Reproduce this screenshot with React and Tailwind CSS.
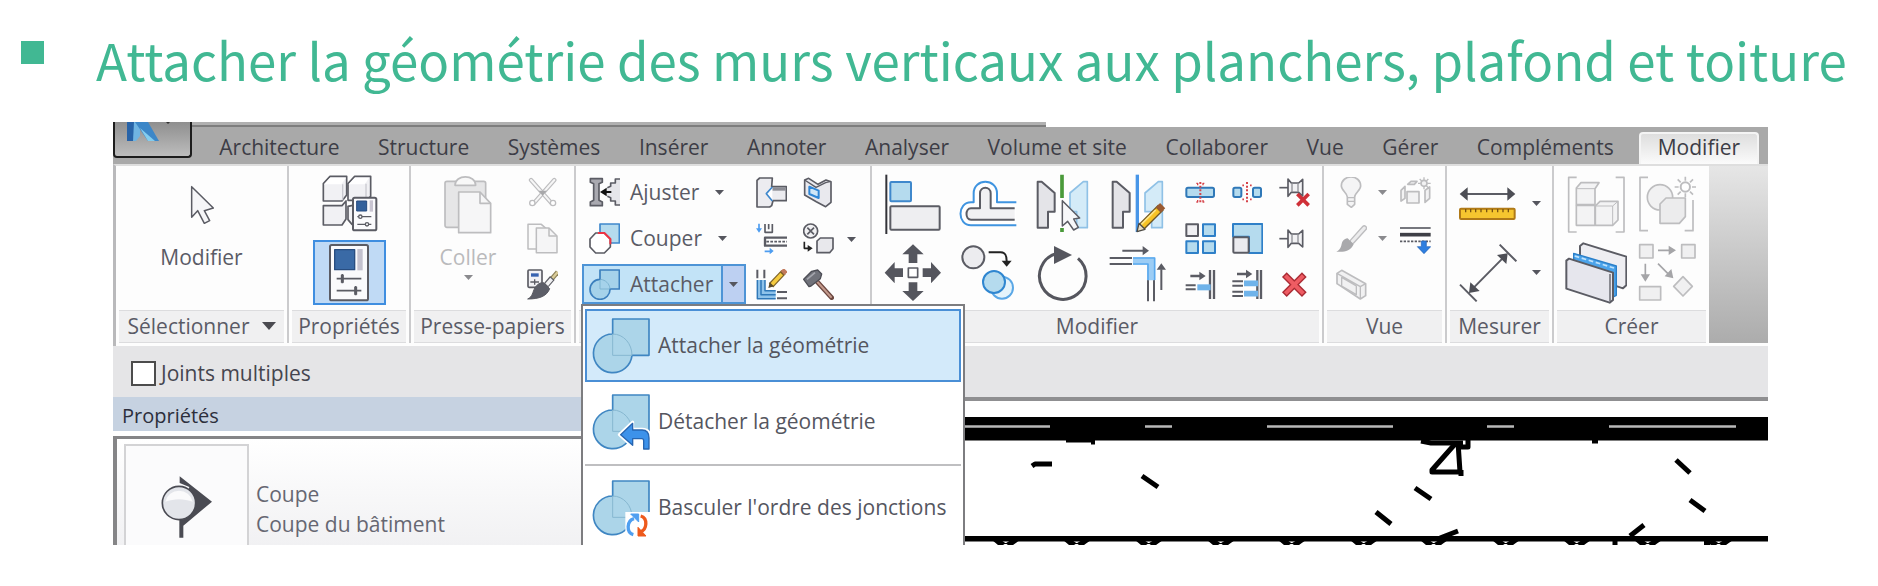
const INK = '#5b5c64';
const BLUE = '#3f88cc';
const SKY = '#b5dbee';
const MUTE = '#bdbdbf';

function Icon({ w, h, box, children }) {
  return (
    <svg width={w} height={h} viewBox={box} fill="none" strokeLinejoin="round" className="shrink-0" aria-hidden="true">
      {children}
    </svg>
  );
}

function Caret({ muted }) {
  return (
    <svg width="9" height="5" viewBox="0 0 9 5" className="shrink-0" aria-hidden="true">
      <path d="M0 0h9L4.500 5z" fill={muted ? '#8a8a8e' : '#55565e'} />
    </svg>
  );
}

/* ---------- Sélectionner / Propriétés ---------- */
const CursorIcon = () => (
  <Icon w={24} h={40} box="267 225 72 120">
    <path d="M272 230v92l18-20 20 38 16-8-16-30 27-8z" fill="#f6f6f8" stroke={INK} strokeWidth="4.5" />
  </Icon>
);

const TypeIcon = () => (
  <Icon w={57} h={57} box="661 196 171 171">
    <g fill="#f1f1f4" stroke={INK} strokeWidth="5">
      <path d="M742 222l20-22h48v60l-12 12h-56z" />
      <path d="M742 290v40l12 14h16v-60z" />
      <path d="M668 222l20-22h50v56l-14 18h-56z" />
      <path d="M668 288h56l12-14v54l-12 18h-56z" />
    </g>
    <path d="M670 224l18-20h48l-14 20zM744 224l18-20h44l-14 20z" fill="#fff" />
    <path d="M726 224v48M796 222v40" stroke="#c9c9d0" strokeWidth="4" />
    <rect x="757" y="264" width="70" height="98" rx="5" fill="#fbfbfd" stroke={INK} strokeWidth="6" />
    <rect x="768" y="274" width="30" height="30" fill="#33619c" stroke="#284d80" strokeWidth="3" />
    <path d="M812 272v34" stroke="#c9c5d2" strokeWidth="10" />
    <path d="M770 321h42M770 344h42" stroke={INK} strokeWidth="4" />
    <circle cx="779" cy="321" r="5" fill="#fff" stroke={INK} strokeWidth="4" />
    <circle cx="799" cy="344" r="5" fill="#fff" stroke={INK} strokeWidth="4" />
  </Icon>
);

const PropsIcon = () => (
  <Icon w={42} h={59} box="678 396 126 177">
    <rect x="684" y="402" width="114" height="166" rx="5" fill="#fafafc" stroke={INK} strokeWidth="6" />
    <rect x="698" y="416" width="60" height="60" fill="#3a6aa6" stroke="#284d80" strokeWidth="4" />
    <path d="M774 414v64" stroke="#c4c2cf" strokeWidth="16" />
    <path d="M704 503h74M704 539h74M721 489v28M761 525v28" stroke={INK} strokeWidth="5" />
    <path d="M721 491v24M761 527v24" stroke={INK} strokeWidth="9" />
  </Icon>
);

/* ---------- Presse-papiers ---------- */
const ClipboardIcon = () => (
  <Icon w={50} h={60} box="130 45 150 180">
    <rect x="136" y="64" width="122" height="138" rx="6" fill="#e6e6e7" stroke={MUTE} strokeWidth="5" />
    <path d="M166 76c0-34 62-34 62 0z" fill="#f8f8f8" stroke={MUTE} strokeWidth="5" />
    <path d="M177 96h64l32 34v88h-96z" fill="#f6f6f7" stroke={MUTE} strokeWidth="5" />
    <path d="M241 96v34h32" stroke={MUTE} strokeWidth="5" />
  </Icon>
);

const ScissorsIcon = () => (
  <Icon w={31} h={31} box="384 51 93 93">
    <path d="M396 60l60 68M466 60l-60 68" stroke={MUTE} strokeWidth="13" strokeLinecap="round" />
    <path d="M396 60l60 68M466 60l-60 68" stroke="#f6f6f6" strokeWidth="6" strokeLinecap="round" />
    <path d="M419 92h24l-12 16z" fill="#a8a8aa" />
    <circle cx="400" cy="129" r="8" fill="#fff" stroke={MUTE} strokeWidth="4" />
    <circle cx="462" cy="129" r="8" fill="#fff" stroke={MUTE} strokeWidth="4" />
  </Icon>
);

const CopyPagesIcon = () => (
  <Icon w={31} h={31} box="384 190 93 93">
    <path d="M387 194h40l18 16v58h-58z" fill="#fafafa" stroke={MUTE} strokeWidth="4.5" />
    <path d="M412 205h38l24 24v50h-62z" fill="#f5f5f6" stroke={MUTE} strokeWidth="4.5" />
    <path d="M450 205v24h24" stroke={MUTE} strokeWidth="4.5" />
  </Icon>
);

const MatchIcon = () => (
  <Icon w={31} h={31} box="384 327 93 93">
    <rect x="387" y="330" width="42" height="52" rx="3" fill="#f1f1f5" stroke={INK} strokeWidth="5" />
    <path d="M396 345h23" stroke="#3762b0" strokeWidth="10" />
    <path d="M394 366h26M407 358v16" stroke={INK} strokeWidth="4" />
    <path d="M476 336l-26 30" stroke="#8b8058" strokeWidth="14" />
    <path d="M476 336l-24 28" stroke="#d9cb98" strokeWidth="7" />
    <path d="M460 354l-18 21" stroke={INK} strokeWidth="18" />
    <path d="M458 357l-15 17" stroke="#f0f0f2" strokeWidth="11" />
    <path d="M434 368l18 18c-8 22-30 31-66 31 16-8 14-20 22-34 6-10 16-16 26-15z" fill="#5c5e68" stroke={INK} strokeWidth="3" />
  </Icon>
);

/* ---------- Géométrie ---------- */
const CopeIcon = () => (
  <Icon w={31} h={31} box="55 52 93 93">
    <path d="M59 57h36v11l-10 4v50l10 5v11H59v-11l10-5V72l-10-4z" fill="#a9a9b0" stroke={INK} strokeWidth="5" />
    <path d="M148 58h-14v12h-14v10l-12 3v26l12 4v10h14v12h14z" fill="#e6e6ea" />
    <path d="M148 58h-14v12h-14v10l-10 4M110 110l10 4v10h14v12h14" stroke={INK} strokeWidth="5" />
    <path d="M122 97H96" stroke="#111" strokeWidth="6" />
    <path d="M88 97l20-13v26z" fill="#111" />
  </Icon>
);

const CutIcon = () => (
  <Icon w={31} h={31} box="55 190 93 93">
    <rect x="88" y="193" width="58" height="57" fill={SKY} stroke={BLUE} strokeWidth="5" />
    <path d="M75 220h26l18 18v24l-18 18H75l-17-18v-24z" fill="#fff" stroke={INK} strokeWidth="5" />
    <path d="M82 220h19l18 18v16" stroke="#ee3344" strokeWidth="6" />
  </Icon>
);

const JoinIcon = () => (
  <Icon w={31} h={31} box="55 327 93 93">
    <path d="M88 330h58v57h-28a30 30 0 1 1-30-29z" fill="#a5d2ea" stroke="#3b7fbd" strokeWidth="5" />
    <path d="M88 360v27h28M90 358c14 2 26 12 28 28" stroke="#7fb5d2" strokeWidth="3" />
  </Icon>
);

const WallOpeningIcon = () => (
  <Icon w={31} h={31} box="557 54 93 93">
    <path d="M560 64l8-7h38l-2 26h44v42h-40l-4 15-6 4h-38z" fill="#ececf0" stroke={INK} strokeWidth="5" />
    <path d="M606 85h40v10h-40z" fill="#8c8d95" />
    <path d="M606 84l-18 20 18 22" stroke={BLUE} strokeWidth="5" fill="#fff" />
  </Icon>
);

const SplitFaceIcon = () => (
  <Icon w={31} h={31} box="702 53 93 93">
    <path d="M707 62l12-5 28 18 24-13 15 5v62l-16 13-28-15-35-20z" fill="#e9e9ee" stroke={INK} strokeWidth="5" />
    <path d="M707 62l34 22 29-14 15-4" stroke={INK} strokeWidth="4" />
    <path d="M721 82l28 12v22l-28-12z" fill="#cfe6f7" stroke="#2f86d6" strokeWidth="6" />
  </Icon>
);

const BeamIcon = () => (
  <Icon w={31} h={31} box="557 189 93 93">
    <path d="M566 191v20M583 274h22" stroke="#4e9df0" strokeWidth="5" />
    <path d="M557 205h18l-9 13zM598 263v20l12-10z" fill="#4e9df0" />
    <path d="M584 192v25h22v-25M595 192v16" stroke={INK} strokeWidth="5" />
    <path d="M650 233h-66v24h66" stroke={INK} strokeWidth="7" />
    <path d="M588 245h62" stroke={INK} strokeWidth="5" strokeDasharray="8 4" />
  </Icon>
);

const DemolishSwapIcon = () => (
  <Icon w={31} h={31} box="700 190 93 93">
    <circle cx="723" cy="214" r="21" fill="#f1f1f3" stroke={INK} strokeWidth="5" />
    <path d="M713 204l20 20M733 204l-20 20" stroke={INK} strokeWidth="5" />
    <path d="M704 246v20h12" stroke="#222" strokeWidth="5" />
    <path d="M714 256l15 10-15 10z" fill="#222" />
    <path d="M742 244l10-9h38v32l-10 12h-38z" fill="#e8e8ec" stroke={INK} strokeWidth="5" />
  </Icon>
);

const WallJoinIcon = () => (
  <Icon w={31} h={31} box="557 327 93 93">
    <path d="M561 329v26M582 329v26M620 396h30M620 415h30" stroke={INK} strokeWidth="6" />
    <path d="M560 360v57h56v-26h-32v-31z" fill="#8fc3ea" />
    <path d="M561 360v56h55M584 360v32h32M572 360v44h44" stroke="#2f78b8" strokeWidth="4.5" />
    <path d="M640 336l-38 40" stroke="#7c6128" strokeWidth="18" />
    <path d="M634 342l-30 32" stroke="#f5cb3f" strokeWidth="11" />
    <path d="M646 330l-9 9" stroke="#c27a5c" strokeWidth="16" />
    <path d="M594 384l4-17 13 12z" fill="#5a4b2a" />
  </Icon>
);

const HammerIcon = () => (
  <Icon w={31} h={31} box="700 327 93 93">
    <path d="M736 358l50 55" stroke="#6b4740" strokeWidth="14" strokeLinecap="round" />
    <path d="M738 360l46 51" stroke="#c49a8c" strokeWidth="6" strokeLinecap="round" />
    <path d="M702 358l24-24 18-4 12 12-4 14-28 22-6 2z" fill="#70727a" stroke="#4d4e56" strokeWidth="4" />
    <path d="M712 358l24-20" stroke="#a5a6ae" strokeWidth="5" />
  </Icon>
);

/* ---------- Modifier ---------- */
const AlignIcon = () => (
  <Icon w={58} h={60} box="42 40 174 180">
    <path d="M49 42v178" stroke="#333339" strokeWidth="6" />
    <rect x="61" y="64" width="62" height="58" rx="3" fill={SKY} stroke={BLUE} strokeWidth="6" />
    <rect x="61" y="137" width="148" height="70" rx="3" fill="#eeeef1" stroke={INK} strokeWidth="6" />
  </Icon>
);

const OffsetIcon = () => (
  <Icon w={58} h={60} box="265 40 174 180">
    <path d="M437 125h-58V98c0-46-70-46-70 0v27h-8c-42 0-42 69 0 69h136" fill="#fff" stroke="#3f94e0" strokeWidth="6" />
    <path d="M432 143h-72V98c0-22-32-22-32 0v45h-27c-18 0-18 34 0 34h131" fill="#f1f1f3" stroke={INK} strokeWidth="6" />
  </Icon>
);

const MirrorShape = ({ dx = 0 }) => (
  <g transform={`translate(${dx} 0)`}>
    <path d="M499 63h12l39 34v56h-20v48h-31z" fill="#e4e4e8" stroke={INK} strokeWidth="6" />
    <path d="M648 63h-12l-40 34v56h20v48h32z" fill="#d4ebf8" stroke="#8fc1e6" strokeWidth="5" />
  </g>
);

const MirrorPickIcon = () => (
  <Icon w={58} h={60} box="488 40 174 180">
    <MirrorShape />
    <path d="M572 42v70M572 202v12" stroke="#4a9a3a" strokeWidth="11" />
    <path d="M573 120v76l16-14 18 26 14-8-14-25 18-3z" fill="#f7f7f9" stroke={INK} strokeWidth="4.5" />
  </Icon>
);

const MirrorDrawIcon = () => (
  <Icon w={58} h={60} box="710 40 174 180">
    <MirrorShape dx={222} />
    <path d="M795 42v172" stroke="#4896e8" strokeWidth="10" />
    <path d="M866 140l-60 60" stroke="#6e5524" strokeWidth="24" />
    <path d="M858 148l-50 50" stroke="#f7c325" strokeWidth="16" />
    <path d="M850 148l-46 46" stroke="#fde58a" strokeWidth="5" />
    <path d="M871 135l-13 13" stroke="#9a5a32" strokeWidth="22" />
    <path d="M794 213l6-25 18 18z" fill="#e9dcc0" stroke="#4c4a44" strokeWidth="4" />
  </Icon>
);

const MoveIcon = () => (
  <Icon w={58} h={60} box="45 245 174 180">
    <path
      d="M132 249l32 30h-19v26h-26v-26h-19zM132 419l32-30h-19v-26h-26v26h-19zM47 334l30-32v19h25v26H77v19zM216 334l-30-32v19h-25v26h25v19z"
      fill="#55565e"
    />
    <rect x="118" y="320" width="28" height="28" fill="#fff" stroke={INK} strokeWidth="5" />
  </Icon>
);

const CopyIcon = () => (
  <Icon w={58} h={60} box="265 245 174 180">
    <circle cx="308" cy="288" r="33" fill="#ececef" stroke={INK} strokeWidth="6" />
    <path d="M354 273h36c14 0 18 8 18 26" stroke="#222" strokeWidth="6" />
    <path d="M393 298h30l-15 18z" fill="#222" />
    <circle cx="394" cy="379" r="33" fill="#e4f3fb" stroke="#5aa7e6" strokeWidth="6" />
    <circle cx="370" cy="362" r="33" fill={SKY} stroke="#2f86d0" strokeWidth="6" />
  </Icon>
);

const RotateIcon = () => (
  <Icon w={58} h={60} box="488 245 174 180">
    <path d="M620 291a70 70 0 1 1-66-14" stroke="#55565e" strokeWidth="9" />
    <path d="M548 254l54 27-54 27z" fill="#55565e" />
  </Icon>
);

const TrimCornerIcon = () => (
  <Icon w={58} h={60} box="712 245 174 180">
    <path d="M752 268h64M869 386v-62" stroke={INK} strokeWidth="6" />
    <path d="M813 254l19 14-19 14zM855 325l14-19 14 19z" fill={INK} />
    <path d="M714 290h67M714 308h67M829 356v64M847 356v64" stroke={INK} strokeWidth="6" />
    <path d="M784 299h54v58" stroke="#9ccdf5" strokeWidth="22" strokeLinejoin="miter" />
    <path d="M784 290h65v66M784 308h45v48" stroke="#5aa9ee" strokeWidth="5" />
  </Icon>
);

const SplitIcon = () => (
  <Icon w={31} h={31} box="43 57 93 93">
    <rect x="47" y="89" width="83" height="28" rx="5" fill={SKY} stroke="#2f78b8" strokeWidth="6" />
    <path d="M89 72v62" stroke="#d5434a" strokeWidth="6" strokeDasharray="6 5" />
    <path d="M77 76h4v6M101 76h-4v6M77 132h4v-6M101 132h-4v-6" stroke="#d5434a" strokeWidth="4" />
  </Icon>
);

const SplitGapIcon = () => (
  <Icon w={31} h={31} box="186 57 93 93">
    <rect x="190" y="89" width="24" height="28" rx="5" fill={SKY} stroke="#2f78b8" strokeWidth="6" />
    <rect x="249" y="89" width="24" height="28" rx="5" fill={SKY} stroke="#2f78b8" strokeWidth="6" />
    <path d="M231 72v62" stroke="#d5434a" strokeWidth="6" strokeDasharray="6 5" />
    <path d="M217 82h5M240 82h5M217 124h5M240 124h5" stroke="#d5434a" strokeWidth="5" />
  </Icon>
);

const PinShape = ({ dy = 0 }) => (
  <g transform={`translate(0 ${dy})`}>
    <path d="M332 237h26" stroke={INK} strokeWidth="5" />
    <path d="M358 211l10 12h22l12-11v50l-12-11h-22l-10 12z" fill="#f2f2f4" stroke={INK} strokeWidth="5" />
    <path d="M370 224v26M388 224v26" stroke="#8f9097" strokeWidth="4" />
  </g>
);

const UnpinIcon = () => (
  <Icon w={31} h={31} box="331 52 93 93">
    <PinShape dy={-153} />
    <path d="M386 103l34 34M420 103l-34 34" stroke="#cf3038" strokeWidth="11" />
  </Icon>
);

const PinIcon = () => (
  <Icon w={31} h={31} box="331 190 93 93">
    <PinShape />
  </Icon>
);

const ArrayIcon = () => (
  <Icon w={31} h={31} box="45 190 93 93">
    <rect x="49" y="194" width="35" height="35" fill="#f0f0f3" stroke={INK} strokeWidth="6" />
    <g fill={SKY} stroke="#2f80c8" strokeWidth="6">
      <rect x="99" y="194" width="36" height="35" />
      <rect x="49" y="245" width="35" height="35" />
      <rect x="99" y="245" width="36" height="35" />
    </g>
  </Icon>
);

const ScaleIcon = () => (
  <Icon w={31} h={31} box="187 190 93 93">
    <path d="M190 193h88v87h-40v-49h-48z" fill={SKY} stroke="#2f80c8" strokeWidth="6" />
    <rect x="191" y="233" width="46" height="46" rx="3" fill="#ebebef" stroke={INK} strokeWidth="6" />
  </Icon>
);

const TrimOneIcon = () => (
  <Icon w={31} h={31} box="47 327 93 93">
    <path d="M63 348h32M122 330v87M134 330v87" stroke={INK} strokeWidth="7" />
    <path d="M90 335l19 13-19 13zM49 373h30v6H49zM49 385h30v6H49z" fill={INK} />
    <path d="M84 382h40" stroke="#6fb3ea" strokeWidth="18" />
  </Icon>
);

const TrimManyIcon = () => (
  <Icon w={31} h={31} box="190 327 93 93">
    <path d="M205 342h30M266 330v87M277 330v87" stroke={INK} strokeWidth="7" />
    <path d="M232 329l19 13-19 13z" fill={INK} />
    <path d="M191 364h32M191 377h32M191 395h32M191 408h32" stroke={INK} strokeWidth="6" />
    <path d="M226 370h42M226 401h42" stroke="#6fb3ea" strokeWidth="17" />
  </Icon>
);

const DeleteIcon = () => (
  <Icon w={31} h={31} box="330 327 93 93">
    <path d="M346 344l60 60M406 344l-60 60" stroke="#a92a33" strokeWidth="20" />
    <path d="M349 347l54 54M403 347l-54 54" stroke="#ee5c63" strokeWidth="12" />
  </Icon>
);

/* ---------- Vue ---------- */
const BulbIcon = () => (
  <Icon w={31} h={31} box="500 54 93 93">
    <path d="M534 114c0-12-18-20-18-33 0-36 58-36 58 0 0 13-18 21-18 33v22l-10 9-12-9z" fill="#f4f4f5" stroke={MUTE} strokeWidth="5" />
    <path d="M534 116h22M534 127h22" stroke={MUTE} strokeWidth="4" />
  </Icon>
);

const BoxesIcon = () => (
  <Icon w={31} h={31} box="701 54 93 93">
    <g fill="#f2f2f3" stroke={MUTE} strokeWidth="5">
      <path d="M704 94l12-12v36l-12 8zM724 76l10-9h18l-8 9zM776 94l14-10v34l-14 12z" />
      <path d="M722 98h36v34h-36z" />
      <circle cx="773" cy="73" r="9" />
    </g>
    <path d="M773 55v8M773 83v8M755 73h8M783 73h10M760 60l6 6M780 80l6 6M786 60l-6 6" stroke={MUTE} strokeWidth="4" />
  </Icon>
);

const BrushMutedIcon = () => (
  <Icon w={31} h={31} box="501 190 93 93">
    <path d="M586 205l-36 40" stroke={MUTE} strokeWidth="17" strokeLinecap="round" />
    <path d="M586 205l-36 40" stroke="#ececed" strokeWidth="9" strokeLinecap="round" />
    <path d="M536 236l18 18c-10 22-30 24-52 22 16-8 14-20 18-30 4-6 10-10 16-10z" fill="#a9a9ac" />
  </Icon>
);

const ThinLinesIcon = () => (
  <Icon w={31} h={31} box="701 190 93 93">
    <path d="M701 205h92" stroke={INK} strokeWidth="5" />
    <path d="M701 225h92" stroke="#3e3f46" strokeWidth="11" />
    <path d="M701 245h92" stroke={INK} strokeWidth="5" strokeDasharray="7 4" />
    <path d="M765 244h15v17h13l-20 21-20-21h12z" fill="#2f7fe0" stroke="#1f5fb4" strokeWidth="2" />
  </Icon>
);

const BoxLongIcon = () => (
  <Icon w={31} h={31} box="501 327 93 93">
    <path d="M504 340l14-9 72 40v36l-16 10-70-46z" fill="#f1f1f2" stroke={MUTE} strokeWidth="5" />
    <path d="M504 340l70 40 16-9M574 380v37M518 352v26l44 26v-26z" stroke={MUTE} strokeWidth="4" />
  </Icon>
);

/* ---------- Mesurer ---------- */
const MeasureIcon = () => (
  <Icon w={58} h={58} box="60 196 174 174">
    <path d="M80 253h132" stroke={INK} strokeWidth="6" />
    <path d="M62 253l24-20v40zM229 253l-24-20v40z" fill="#4d4e55" />
    <rect x="63" y="297" width="164" height="31" rx="3" fill="#f6c62f" stroke="#b07a18" strokeWidth="6" />
    <path d="M80 298v10M95 298v10M110 298v10M126 298v10M143 298v10M160 298v10M176 298v10M192 298v10M208 298v10" stroke="#7a5410" strokeWidth="4" />
  </Icon>
);

const DimensionIcon = () => (
  <Icon w={58} h={58} box="60 396 174 174">
    <path d="M105 526l85-86M63 518l50 50M182 398l50 50" stroke={INK} strokeWidth="6" />
    <path d="M90 543l4-32 28 26zM206 424l-32 5 28 27z" fill="#4d4e55" />
  </Icon>
);

/* ---------- Créer ---------- */
const GroupIcon = () => (
  <Icon w={60} h={60} box="376 192 180 180">
    <path d="M408 202h-24v164h24M525 202h25v164h-25" stroke={MUTE} strokeWidth="5" />
    <g fill="#f3f3f4" stroke={MUTE} strokeWidth="5">
      <path d="M407 234l14-16h54l-12 18v48h-56z" />
      <path d="M407 286h56v60h-56z" />
      <path d="M464 288l14-14h54v56l-16 16h-52z" />
    </g>
    <path d="M407 236h56M516 346v-58h-50M516 288l16-14" stroke={MUTE} strokeWidth="3" />
  </Icon>
);

const AssemblyIcon = () => (
  <Icon w={60} h={60} box="596 192 180 180">
    <path d="M626 202h-24v160h24M736 362h25v-92" stroke={MUTE} strokeWidth="5" />
    <circle cx="662" cy="262" r="38" fill="#f1f1f2" stroke={MUTE} strokeWidth="5" />
    <path d="M662 282l18-18h58v56l-18 20h-58z" fill="#ececed" stroke={MUTE} strokeWidth="5" />
    <circle cx="738" cy="231" r="14" fill="#fff" stroke={MUTE} strokeWidth="6" />
    <path d="M738 200v12M738 250v12M706 231h12M758 231h12M715 208l9 9M752 245l9 9M761 208l-9 9M715 254l9-9" stroke={MUTE} strokeWidth="5" />
  </Icon>
);

const WallsIcon = () => (
  <Icon w={62} h={62} box="373 396 186 186">
    <path d="M418 408l10-8 129 40v86l-10 9-129-44z" fill="#eeeef2" stroke={INK} strokeWidth="6" />
    <path d="M399 430l128 38v88l-12 6-116-44z" fill="#4ba3ea" stroke="#2a7fc9" strokeWidth="4" />
    <path d="M402 438l118 36" stroke="#bfe2fb" strokeWidth="5" strokeDasharray="14 8" />
    <path d="M377 452l8-6 132 42v82l-10 8-130-42z" fill="#e6e6ed" stroke={INK} strokeWidth="6" />
    <path d="M508 492v82" stroke={INK} strokeWidth="4" />
  </Icon>
);

const SimilarIcon = () => (
  <Icon w={60} h={60} box="590 396 180 180">
    <g fill="#f0f0f1" stroke={MUTE} strokeWidth="5">
      <rect x="595" y="401" width="40" height="40" />
      <rect x="721" y="401" width="40" height="40" />
      <rect x="595" y="527" width="63" height="40" />
      <path d="M725 497l28 29-28 29-28-29z" />
    </g>
    <path d="M650 418h34M612 458v34M650 458l32 32" stroke="#a5a5a8" strokeWidth="5" />
    <path d="M682 404l22 14-22 14zM598 490h28l-14 22zM696 502l-26-6 20-22z" fill="#a5a5a8" />
  </Icon>
);

/* ---------- Menu icons ---------- */
const MenuJoin = ({ children }) => (
  <Icon w={58} h={58} box="66 77 174 174">
    <path d="M128 83h109v109h-51a58 58 0 1 1-58-64z" fill="#acd5e9" stroke="#3f86c2" strokeWidth="5" />
    <path d="M128 128v64h58M128 128c32 0 58 28 58 64" stroke="#86b7d0" strokeWidth="3" />
    {children}
  </Icon>
);

const UndoMark = () => (
  <>
    <path d="M148 202l40-38v22h28c16 0 24 10 24 26v36h-22v-30h-30v20z" fill="#fff" stroke="#fff" strokeWidth="9" />
    <path d="M152 202l36-34v20h28c14 0 21 8 21 24v33h-16v-25c0-4-2-6-6-6h-27v20z" fill="#3d92ea" stroke="#2765b0" strokeWidth="4" />
  </>
);

const SwapMark = () => (
  <>
    <path d="M166 176h78v78h-78z" fill="#fff" />
    <path d="M190 244c-22-6-20-42 2-48" stroke="#4f9ff0" strokeWidth="10" />
    <path d="M182 182h24v24z" fill="#4f9ff0" stroke="#4f9ff0" strokeWidth="3" />
    <path d="M212 188c22 6 20 42-2 48" stroke="#ee5a1c" strokeWidth="10" />
    <path d="M204 222v26h24z" fill="#ee5a1c" stroke="#ee5a1c" strokeWidth="3" />
  </>
);

const SectionIcon = () => (
  <Icon w={52} h={64} box="187 406 156 192">
    <path d="M243 410l97 76-86 72v36h-12v-60l30-92-29-12z" fill="#4a4b53" />
    <circle cx="241" cy="490" r="50" fill="#e3e5ea" stroke="#4a4b53" strokeWidth="5" />
    <path d="M200 486a42 42 0 0 1 82 0c-26-10-56-10-82 0z" fill="#fafafb" />
  </Icon>
);

function Tool({ label, children, className = '' }) {
  return (
    <button type="button" aria-label={label} className={`flex items-center justify-center ${className}`}>
      {children}
    </button>
  );
}

function Panel({ title, width, caret, last, children }) {
  return (
    <section className={`flex shrink-0 flex-col bg-[#fdfdfd] ${width} ${last ? '' : 'border-r-2 border-[#cbcbcd]'}`}>
      <div className="flex h-36 pt-[3px]">{children}</div>
      <h2 className="mx-[3px] flex h-[33px] items-center justify-center gap-3 whitespace-nowrap border-y border-[#dcdcde] bg-[#f0f0f1] pb-[2px]">
        {title}
        {caret && (
          <svg width="14" height="8" viewBox="0 0 14 8" aria-hidden="true">
            <path d="M0 0h14L7 8z" fill="#4a4a50" />
          </svg>
        )}
      </h2>
    </section>
  );
}

const TABS = ['Architecture', 'Structure', 'Systèmes', 'Insérer', 'Annoter', 'Analyser', 'Volume et site', 'Collaborer', 'Vue', 'Gérer', 'Compléments'];

const BIG_TOOLS = [
  ['Aligner', AlignIcon],
  ['Décaler', OffsetIcon],
  ['Symétrie - Choisir un axe', MirrorPickIcon],
  ['Symétrie - Dessiner un axe', MirrorDrawIcon],
  ['Déplacer', MoveIcon],
  ['Copier', CopyIcon],
  ['Rotation', RotateIcon],
  ['Ajuster en angle', TrimCornerIcon],
];

const SMALL_TOOLS = [
  ['Scinder', SplitIcon],
  ['Scinder avec espace', SplitGapIcon],
  ['Déverrouiller', UnpinIcon],
  ['Réseau', ArrayIcon],
  ['Échelle', ScaleIcon],
  ['Verrouiller', PinIcon],
  ['Prolonger un élément', TrimOneIcon],
  ['Prolonger plusieurs éléments', TrimManyIcon],
  ['Supprimer', DeleteIcon],
];

const NOTCHES = [992, 1063, 1135, 1207, 1278, 1350, 1420, 1492, 1563, 1634, 1705];

function Ribbon() {
  return (
    <div className="flex border-t-2 border-l-[3px] border-t-[#dedede] border-l-[#b9b9bb] bg-[#fdfdfd] pb-[3px] leading-[28px]">
      <Panel title="Sélectionner" width="w-[173px]" caret>
        <button type="button" className="flex flex-1 flex-col items-center gap-[18px] pt-4">
          <CursorIcon />
          <span>Modifier</span>
        </button>
      </Panel>

      <Panel title="Propriétés" width="w-[122px]">
        <div className="flex flex-1 flex-col items-center gap-2 pt-[6px]">
          <Tool label="Propriétés du type"><TypeIcon /></Tool>
          <Tool label="Propriétés" className="h-[65px] w-[73px] border-2 border-[#3f8ee0] bg-[#c0daf5]"><PropsIcon /></Tool>
        </div>
      </Panel>

      <Panel title="Presse-papiers" width="w-[165px]">
        <button type="button" disabled className="ml-[18px] flex w-[78px] flex-col items-center pt-[6px] text-[#bababc]">
          <ClipboardIcon />
          <span className="mt-2 mb-1">Coller</span>
          <Caret muted />
        </button>
        <div className="ml-5 grid grid-rows-[repeat(3,46px)]">
          <Tool label="Couper vers le presse-papiers"><ScissorsIcon /></Tool>
          <Tool label="Copier dans le presse-papiers"><CopyPagesIcon /></Tool>
          <Tool label="Copier les propriétés du type"><MatchIcon /></Tool>
        </div>
      </Panel>

      <Panel width="w-[296px]">
        <div className="ml-[6px] grid w-[164px] grid-rows-[repeat(3,46px)]">
          <button type="button" className="flex items-center gap-[10px] pl-[7px]">
            <CopeIcon />
            <span className="mr-[6px]">Ajuster</span>
            <Caret />
          </button>
          <button type="button" className="flex items-center gap-[10px] pl-[7px]">
            <CutIcon />
            <span className="mr-[6px]">Couper</span>
            <Caret />
          </button>
          <div className="flex h-10 self-center border-2 border-[#4e94d6] bg-[#c2e3f7]">
            <button type="button" className="flex flex-1 items-center gap-[10px] pl-[5px]">
              <JoinIcon />
              <span>Attacher</span>
            </button>
            <button type="button" aria-label="Options d'attache" aria-expanded="true" className="flex w-[23px] items-center justify-center border-l-2 border-[#4e94d6] bg-[#bdd0f2]">
              <Caret />
            </button>
          </div>
        </div>
        <div className="ml-[10px] grid grid-cols-[31px_31px] grid-rows-[repeat(3,46px)] gap-x-4">
          <Tool label="Ouverture de mur"><WallOpeningIcon /></Tool>
          <Tool label="Scinder une face"><SplitFaceIcon /></Tool>
          <Tool label="Attacher une poutre"><BeamIcon /></Tool>
          <Tool label="Remplacer"><DemolishSwapIcon /></Tool>
          <Tool label="Jonctions de murs"><WallJoinIcon /></Tool>
          <Tool label="Démolir"><HammerIcon /></Tool>
        </div>
        <Tool label="Autres outils" className="ml-[13px]"><Caret /></Tool>
      </Panel>

      <Panel title="Modifier" width="w-[452px]">
        <div className="ml-[3px] grid grid-cols-[repeat(4,75px)] grid-rows-[69px_69px]">
          {BIG_TOOLS.map(([name, Glyph]) => <Tool key={name} label={name}><Glyph /></Tool>)}
        </div>
        <div className="ml-[10px] grid grid-cols-[repeat(3,31px)] grid-rows-[repeat(3,46px)] gap-x-4">
          {SMALL_TOOLS.map(([name, Glyph]) => <Tool key={name} label={name}><Glyph /></Tool>)}
        </div>
      </Panel>

      <Panel title="Vue" width="w-[123px]">
        <div className="ml-[12px] grid grid-cols-[31px_10px_31px] grid-rows-[repeat(3,46px)] gap-x-[10px]">
          <Tool label="Masquer"><BulbIcon /></Tool>
          <Tool label="Options de masquage"><Caret muted /></Tool>
          <Tool label="Zone de sélection" className="ml-[6px]"><BoxesIcon /></Tool>
          <Tool label="Remplacer les graphismes"><BrushMutedIcon /></Tool>
          <Tool label="Options de graphismes"><Caret muted /></Tool>
          <Tool label="Lignes fines" className="ml-[6px]"><ThinLinesIcon /></Tool>
          <Tool label="Zone de coupe"><BoxLongIcon /></Tool>
        </div>
      </Panel>

      <Panel title="Mesurer" width="w-[107px]">
        <div className="ml-[12px] grid grid-cols-[58px_10px] grid-rows-[69px_69px] gap-x-[14px]">
          <Tool label="Mesurer"><MeasureIcon /></Tool>
          <Tool label="Options de mesure"><Caret /></Tool>
          <Tool label="Cote alignée"><DimensionIcon /></Tool>
          <Tool label="Options de cote"><Caret /></Tool>
        </div>
      </Panel>

      <Panel title="Créer" width="w-[155px]" last>
        <div className="ml-[6px] grid grid-cols-[72px_72px] grid-rows-[69px_69px]">
          <Tool label="Créer un groupe"><GroupIcon /></Tool>
          <Tool label="Créer un assemblage"><AssemblyIcon /></Tool>
          <Tool label="Créer des pièces"><WallsIcon /></Tool>
          <Tool label="Créer similaire"><SimilarIcon /></Tool>
        </div>
      </Panel>

      <div className="flex-1 bg-linear-to-b from-[#e6e6e6] to-[#acacac]" />
    </div>
  );
}

function JoinMenu() {
  return (
    <ul role="menu" className="absolute left-[468px] top-[182px] w-[384px] border-2 border-[#7d7d80] bg-white px-[2px] pt-[3px] text-[#55565f]">
      <li role="none">
        <button type="button" role="menuitem" className="flex h-[73px] w-full items-center gap-2 whitespace-nowrap border-2 border-[#4a8fd6] bg-[#d3eafa] pl-[5px]">
          <MenuJoin />
          Attacher la géométrie
        </button>
      </li>
      <li role="none">
        <button type="button" role="menuitem" className="flex h-20 w-full items-center gap-2 whitespace-nowrap pl-[7px]">
          <MenuJoin><UndoMark /></MenuJoin>
          Détacher la géométrie
        </button>
      </li>
      <li role="separator" className="my-[2px] h-[2px] bg-[#bfbfc1]" />
      <li role="none">
        <button type="button" role="menuitem" className="flex h-20 w-full items-center gap-2 whitespace-nowrap pl-[7px]">
          <MenuJoin><SwapMark /></MenuJoin>
          Basculer l'ordre des jonctions
        </button>
      </li>
    </ul>
  );
}

function Plan() {
  return (
    <svg viewBox="582 401 1186 144" preserveAspectRatio="xMaxYMin slice" className="h-36 w-full" fill="none" aria-label="Vue en coupe">
      <rect x="582" y="417" width="1186" height="23.5" fill="#000" />
      <path d="M582 426.500H1050M1145 426.500h27M1267 426.500h126M1487 426.500h27M1609 426.500h127" stroke="#b9b9b9" strokeWidth="2.500" />
      <g stroke="#000" strokeWidth="5" strokeLinejoin="round">
        <path d="M1066 440h28M1091 442h4M1592 441h6" />
        <path d="M1032 466l3-2h17M1142 476l16 11M1376 512l15 12M1415 488l16 11M1676 460l14 13M1690 500l15 11" />
        <path d="M1455 444l-23 26v2h28l-2-30M1461 476v-6" />
        <path d="M1421 441l10 2h32M1458 447h10v-8" />
        <path d="M1440 538l18-7M1630 536l14-11M1615 540v5" />
      </g>
      <rect x="582" y="536" width="1186" height="5.500" fill="#000" />
      <path d={NOTCHES.map((x) => `M${x} 540h9l7 5h-10zM${x + 28} 540h-9l-8 5h10z`).join('')} fill="#000" />
      <path d="M1704 541h6v4h-6z" fill="#000" />
    </svg>
  );
}

export default function App() {
  return (
    <main className="bg-white font-['Open_Sans','Noto_Sans',sans-serif] text-[21px] text-[#5a5b66]">
      <h1 className="flex h-[122px] items-start gap-[52px] whitespace-nowrap pl-[21px] pt-[22px] font-['Noto_Sans_CJK_SC','Noto_Sans',sans-serif] text-[51px] leading-[74px] text-[#41b893]">
        <span className="mt-[19px] size-[23px] shrink-0 bg-[#41b893]" />
        Attacher la géométrie des murs verticaux aux planchers, plafond et toiture
      </h1>

      <div className="relative ml-[113px] mr-[110px] h-[423px] overflow-hidden">
        <header className="flex h-[42px]">
          <div className="w-[79px] shrink-0 bg-[#a9a9a9]">
            <button type="button" aria-label="Menu de l'application" className="block h-9 w-full rounded-b-sm border-2 border-t-0 border-[#1d1d1d] bg-linear-to-b from-[#8f8f8f] to-[#bdbdbd] pl-[12px]">
              <svg width="56" height="34" viewBox="0 0 56 34" aria-hidden="true">
                <path d="M0 0h7v19H0z" fill="#2763a8" />
                <path d="M7 0h6v14L9 19H6z" fill="#6fb4e2" />
                <path d="M8 0h13l11 19H21z" fill="#3c87c8" />
                <path d="M13 6l15 13h-7z" fill="#84cdee" />
                <path d="M39 0h4l-2 2z" fill="#333" />
              </svg>
            </button>
          </div>
          <div className="flex flex-1 flex-col">
            <div className="h-[5px] w-[54.2%] shrink-0 border-b-2 border-[#7e7e7e] bg-[#b0b0b0]" />
            <nav className="flex h-[37px] shrink-0 items-stretch bg-[#a9a9a9] pr-[9px] pl-2 leading-[30px] text-[#3d3d46]">
              {TABS.map((t) => (
                <a key={t} href="#" className="flex grow items-center justify-center whitespace-nowrap px-4 pt-[3px]">{t}</a>
              ))}
              <a href="#" aria-current="page" className="mt-[5px] ml-[6px] flex w-[120px] items-center justify-center rounded-t-sm border-x-2 border-t-2 border-[#f4f4f4] bg-linear-to-b from-[#dedede] to-[#fbfbfb] pb-1">Modifier</a>
            </nav>
          </div>
        </header>

        <Ribbon />

        <div className="flex h-[51px] items-center bg-[#e5e5e7] pl-[18px] pt-1 text-[#45454f]">
          <label className="flex items-center gap-[5px]">
            <input type="checkbox" className="size-[25px] appearance-none border-2 border-[#4c4c4c] bg-white" />
            Joints multiples
          </label>
        </div>

        <div className="flex">
          <aside className="w-[469px] shrink-0">
            <h2 className="flex h-[34px] items-center bg-[#c6d2e1] pl-[9px] pt-[3px] text-[20px] leading-[30px] text-[#2c2f3c]">Propriétés</h2>
            <div className="mt-[5px] flex h-[110px] border-l-4 border-t-[3px] border-[#858587] bg-linear-to-b from-white to-[#f1f1f3] pl-[7px] pt-[5px]">
              <div className="flex w-[125px] items-center justify-center border-2 border-b-0 border-[#d3d3d5] bg-[#fbfbfc] pt-[21px]">
                <SectionIcon />
              </div>
              <p className="pl-[7px] pt-[35px] leading-[30px] text-[#666772]">
                Coupe
                <br />
                Coupe du bâtiment
              </p>
            </div>
          </aside>
          <div className="min-w-0 flex-1 border-t-4 border-[#8f8f91]">
            <Plan />
          </div>
        </div>

        <JoinMenu />
      </div>
    </main>
  );
}
